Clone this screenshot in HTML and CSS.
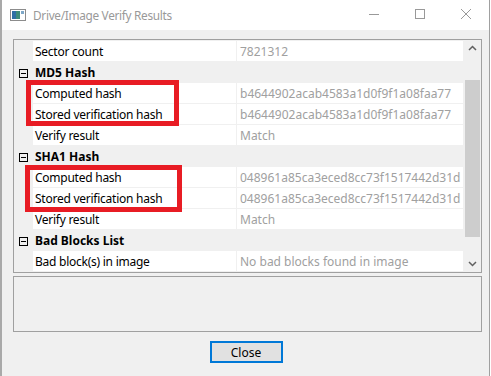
FILE: index.html
```html
<!DOCTYPE html>
<html>
  <head>
    <title>Drive/Image Verify Results</title>
    <link rel="stylesheet" href="styles.css">
  </head>

  <body>
    <div id="window">
      <div id="titlebar">
        <svg class="app-icon" width="16" height="14" viewBox="0 0 16 14">
          <rect x="0.5" y="1.5" width="15" height="11" fill="#fff" stroke="#8c8c8c" />
          <rect x="2" y="3" width="8" height="8" fill="#3d8c7a" />
          <rect x="2" y="3" width="4" height="8" fill="#2f6fa5" />
          <rect x="11" y="3" width="3" height="3" fill="#7fa8c8" />
        </svg>
        <span class="title">Drive/Image Verify Results</span>
        <div class="controls">
          <svg width="46" height="30" viewBox="0 0 46 30"><line x1="18" y1="14.5" x2="28" y2="14.5" stroke="#999" /></svg>
          <svg width="46" height="30" viewBox="0 0 46 30"><rect x="18.5" y="9.5" width="9" height="9" fill="none" stroke="#999" /></svg>
          <svg width="46" height="30" viewBox="0 0 46 30"><path d="M18 9 L28 19 M28 9 L18 19" stroke="#999" /></svg>
        </div>
      </div>

      <div id="content">
        <div id="tree">
          <div class="rows">
            <div class="row">
              <div class="margin"></div>
              <div class="label">Sector count</div>
              <div class="value">7821312</div>
            </div>
            <div class="row group">
              <div class="margin"><span class="toggle"></span></div>
              <div class="label">MD5 Hash</div>
            </div>
            <div class="row">
              <div class="margin"></div>
              <div class="label">Computed hash</div>
              <div class="value">b4644902acab4583a1d0f9f1a08faa77</div>
            </div>
            <div class="row">
              <div class="margin"></div>
              <div class="label">Stored verification hash</div>
              <div class="value">b4644902acab4583a1d0f9f1a08faa77</div>
            </div>
            <div class="row">
              <div class="margin"></div>
              <div class="label">Verify result</div>
              <div class="value">Match</div>
            </div>
            <div class="row group">
              <div class="margin"><span class="toggle"></span></div>
              <div class="label">SHA1 Hash</div>
            </div>
            <div class="row">
              <div class="margin"></div>
              <div class="label">Computed hash</div>
              <div class="value">048961a85ca3eced8cc73f1517442d31d</div>
            </div>
            <div class="row">
              <div class="margin"></div>
              <div class="label">Stored verification hash</div>
              <div class="value">048961a85ca3eced8cc73f1517442d31d</div>
            </div>
            <div class="row">
              <div class="margin"></div>
              <div class="label">Verify result</div>
              <div class="value">Match</div>
            </div>
            <div class="row group">
              <div class="margin"><span class="toggle"></span></div>
              <div class="label">Bad Blocks List</div>
            </div>
            <div class="row">
              <div class="margin"></div>
              <div class="label">Bad block(s) in image</div>
              <div class="value">No bad blocks found in image</div>
            </div>
          </div>

          <div class="scrollbar">
            <svg width="17" height="17" viewBox="0 0 17 17"><path d="M5 10 L8.5 6.5 L12 10" fill="none" stroke="#606060" stroke-width="1.5" /></svg>
            <div class="track"><div class="thumb"></div></div>
            <svg width="17" height="17" viewBox="0 0 17 17"><path d="M5 7 L8.5 10.5 L12 7" fill="none" stroke="#606060" stroke-width="1.5" /></svg>
          </div>

          <!-- annotation boxes -->
          <div class="mark mark-md5"></div>
          <div class="mark mark-sha1"></div>
        </div>

        <div id="description"></div>

        <div class="buttons">
          <button>Close</button>
        </div>
      </div>
    </div>
  </body>
</html>
```

FILE: styles.css
```css
body {
  margin: 0;
  background: #fff;
  font-family: "Noto Sans", "Open Sans", sans-serif;
  font-size: 12px;
}

#window {
  width: 490px;
  height: 376px;
  border-left: 2px solid #a9a9a9;
  border-right: 1px solid #a0a0a0;
  background: #f0f0f0;
  box-sizing: border-box;
}

#titlebar {
  display: flex;
  align-items: center;
  height: 30px;
  background: #fff;
  padding-left: 8px;
}

#titlebar .title {
  margin-left: 7px;
  color: #999;
  font-size: 11.8px;
  letter-spacing: -0.3px;
}

.controls {
  display: flex;
  margin-left: auto;
}

#content {
  padding: 9px 7px 0 11px;
}

#tree {
  position: relative;
  display: flex;
  height: 234px;
  border: 1px solid #a0a0a0;
  box-sizing: border-box;
}

.rows {
  flex: 1;
  display: flex;
  flex-direction: column;
  gap: 1px;
  padding: 1px 0;
  background: #f0f0f0;
}

.row {
  display: grid;
  grid-template-columns: 18px 203px 1fr;
  column-gap: 1px;
  height: 20px;
  line-height: 22px;
  overflow: hidden;
}

.row .label {
  background: #fff;
  padding-left: 2px;
  color: #000;
  letter-spacing: -0.25px;
}

.row .value {
  background: #fff;
  padding-left: 3px;
  color: #a0a0a0;
  white-space: nowrap;
  overflow: hidden;
}

.row.group .label {
  font-weight: bold;
  letter-spacing: 0;
  background: transparent;
  grid-column: 2 / 4;
}

.margin {
  display: flex;
  align-items: center;
  justify-content: center;
  padding-left: 1px;
}

.toggle {
  position: relative;
  width: 7px;
  height: 7px;
  border: 1px solid #000;
}

.toggle::after {
  content: "";
  position: absolute;
  left: 1px;
  top: 3px;
  width: 5px;
  height: 1px;
  background: #000;
}

.scrollbar {
  display: flex;
  flex-direction: column;
  width: 17px;
  background: #f0f0f0;
  border-left: 1px solid #f0f0f0;
}

.track {
  flex: 1;
  padding: 23px 1px 18px 1px;
  display: flex;
}

.thumb {
  flex: 1;
  background: #cdcdcd;
}

.mark {
  position: absolute;
  border: 5px solid #e81c24;
  box-sizing: border-box;
}

.mark-md5 {
  left: 12px;
  top: 40px;
  width: 153px;
  height: 46px;
}

.mark-sha1 {
  left: 11px;
  top: 125px;
  width: 157px;
  height: 47px;
}

#description {
  height: 56px;
  margin-top: 3px;
  border: 1px solid #a0a0a0;
  box-sizing: border-box;
}

.buttons {
  display: flex;
  justify-content: center;
  padding-top: 9px;
  padding-right: 3px;
}

button {
  width: 73px;
  height: 22px;
  background: #e1e1e1;
  border: 2px solid #0078d7;
  font-family: "Noto Sans", "Open Sans", sans-serif;
  font-size: 12px;
  color: #000;
  padding: 0;
}
```
